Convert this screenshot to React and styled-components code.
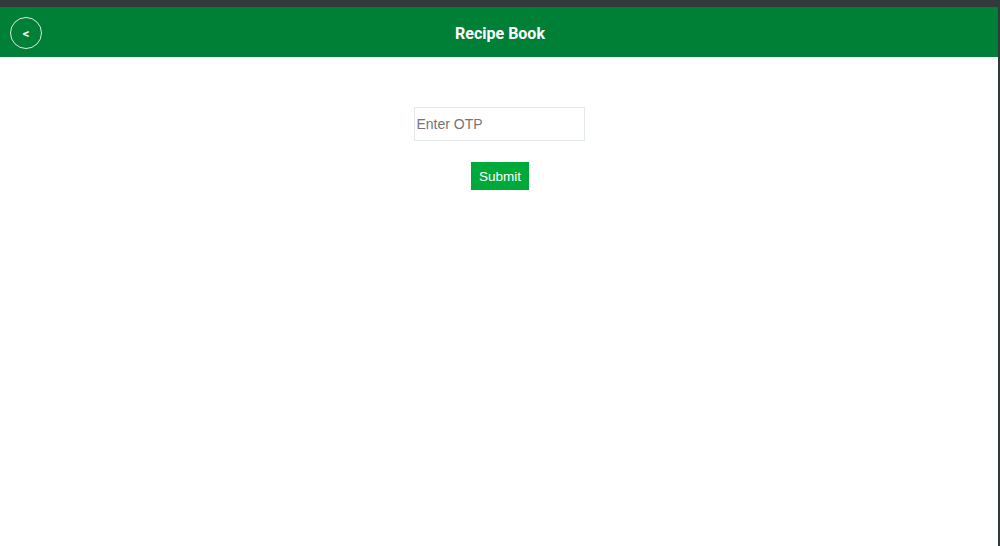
import styled, { createGlobalStyle } from "styled-components";

const GlobalStyle = createGlobalStyle`
  html, body {
    margin: 0;
    padding: 0;
    background: #343a3c;
  }
  * {
    box-sizing: border-box;
  }
`;

export default function App() {
  return (
    <>
      <GlobalStyle />
      <Frame>
        <Page>
          <Header>
            <BackButton aria-label="Back">&lt;</BackButton>
            <Title>Recipe Book</Title>
          </Header>
          <Form onSubmit={(e) => e.preventDefault()}>
            <OtpInput type="text" placeholder="Enter OTP" />
            <SubmitButton type="submit">Submit</SubmitButton>
          </Form>
        </Page>
      </Frame>
    </>
  );
}

const Frame = styled.div`
  width: 1000px;
  height: 546px;
  padding: 7px 2px 0 0;
  background: #343a3c;
`;

const Page = styled.div`
  height: 100%;
  background: #ffffff;
  display: flex;
  flex-direction: column;
`;

const Header = styled.header`
  position: relative;
  height: 50px;
  padding-top: 2px;
  background: #008037;
  display: flex;
  align-items: center;
  justify-content: center;
`;

const BackButton = styled.button`
  position: absolute;
  left: 10px;
  top: 10px;
  width: 32px;
  height: 32px;
  border-radius: 50%;
  border: 1px solid #d8e8de;
  background: transparent;
  color: #ffffff;
  font-family: Roboto, "Liberation Sans", sans-serif;
  font-weight: 700;
  font-size: 13px;
  padding: 0;
  display: flex;
  align-items: center;
  justify-content: center;
  cursor: pointer;
`;

const Title = styled.h1`
  margin: 0 0 0 2px;
  color: #ffffff;
  font-family: Roboto, "Liberation Sans", sans-serif;
  font-weight: 700;
  font-size: 16px;
`;

const Form = styled.form`
  display: flex;
  flex-direction: column;
  align-items: center;
  gap: 21px;
  padding-top: 50px;
`;

const OtpInput = styled.input`
  width: 171px;
  height: 34px;
  border: 1px solid #e3e9e9;
  padding: 0 2px;
  font-family: "Liberation Sans", Arial, sans-serif;
  font-size: 14px;
  color: #333;
  outline: none;

  &::placeholder {
    color: #757575;
  }
`;

const SubmitButton = styled.button`
  width: 58px;
  height: 28px;
  margin-left: 2px;
  border: none;
  background: #00aa3a;
  color: #ffffff;
  font-family: "Liberation Sans", Arial, sans-serif;
  font-size: 13.5px;
  padding: 0;
  cursor: pointer;
`;
